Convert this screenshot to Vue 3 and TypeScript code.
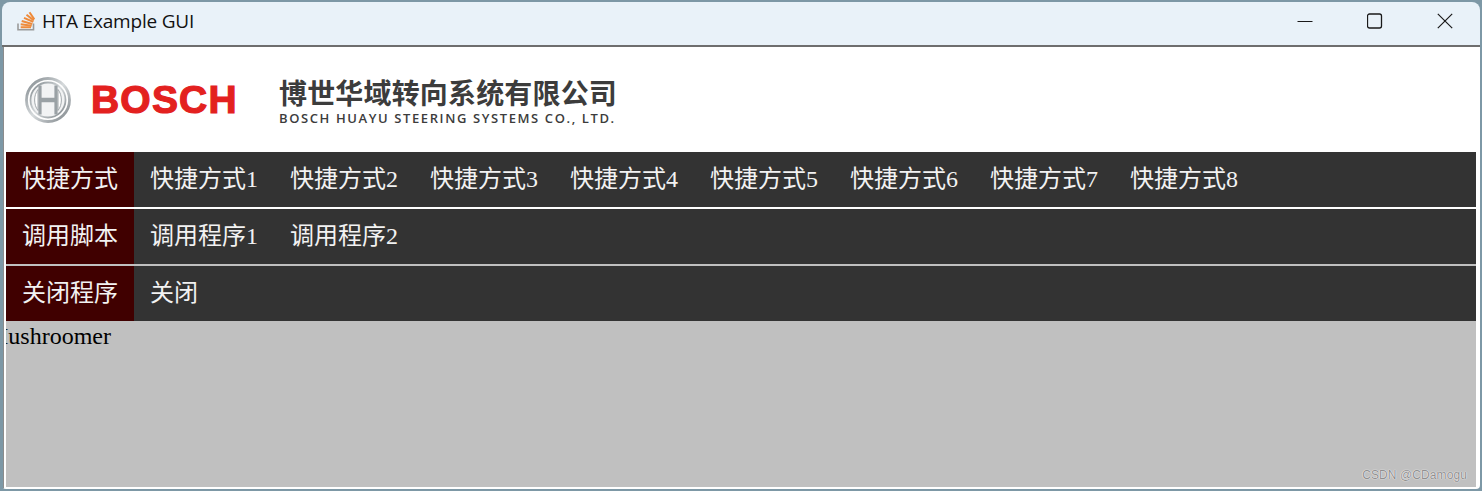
<script setup lang="ts">
const rows: { label: string; items: string[]; divider: string }[] = [
  { label: '快捷方式', items: ['快捷方式1','快捷方式2','快捷方式3','快捷方式4','快捷方式5','快捷方式6','快捷方式7','快捷方式8'], divider: 'white' },
  { label: '调用脚本', items: ['调用程序1','调用程序2'], divider: 'grey' },
  { label: '关闭程序', items: ['关闭'], divider: 'none' },
]
</script>

<template>
  <div class="desktop">
    <div class="window">
      <header class="titlebar">
        <svg class="appicon" width="20" height="20" viewBox="0 0 20 20">
          <path d="M2 12.5v6.3h15.5v-6.3" fill="none" stroke="#9a9a9a" stroke-width="1.6"/>
          <g stroke="#ee8a3a" stroke-width="2" fill="none">
            <path d="M4.7 16.3H15"/>
            <path d="M4.7 13.3l11 1.4"/>
            <path d="M5.7 10l10.6 3"/>
            <path d="M8 6.8l9.3 4"/>
            <path d="M10.5 3.8l7.3 5.6"/>
            <path d="M13.5 1.2l4.8 7"/>
          </g>
        </svg>
        <span class="title">HTA Example GUI</span>
        <div class="controls">
          <svg width="16" height="16" viewBox="0 0 16 16"><path d="M0.5 8.5h15" stroke="#1a1a1a" fill="none"/></svg>
          <svg width="16" height="16" viewBox="0 0 16 16"><rect x="0.5" y="1" width="14" height="14" rx="2" stroke="#1a1a1a" stroke-width="1.3" fill="none"/></svg>
          <svg width="16" height="16" viewBox="0 0 16 16"><path d="M0.8 0.8l14.4 14.4M15.2 0.8L0.8 15.2" stroke="#1a1a1a" stroke-width="1.2" fill="none"/></svg>
        </div>
      </header>

      <main class="client">
        <div class="brand">
          <svg class="emblem" width="46" height="46" viewBox="0 0 46 46">
            <defs>
              <linearGradient id="chrome" x1="0" y1="0" x2="1" y2="1">
                <stop offset="0" stop-color="#7f878c"/>
                <stop offset="0.5" stop-color="#d6dadc"/>
                <stop offset="1" stop-color="#7b8287"/>
              </linearGradient>
            </defs>
            <circle cx="23" cy="23" r="21.5" fill="#fff" stroke="url(#chrome)" stroke-width="2.8"/>
            <circle cx="23" cy="23" r="17.5" fill="#f2f3f4" stroke="url(#chrome)" stroke-width="1.8"/>
            <path d="M13 12.5C8.5 18 8.5 28 13 33.5V12.5ZM33 12.5C37.5 18 37.5 28 33 33.5V12.5Z" fill="#fff" stroke="#a2a8ac"/>
            <path d="M15 8.5V37.5M31 8.5V37.5" stroke="#9aa1a5" stroke-width="3.2" fill="none"/>
            <path d="M15 23H31" stroke="#9aa1a5" stroke-width="4.6" fill="none"/>
          </svg>
          <span class="wordmark">BOSCH</span>
          <div class="company">
            <span class="cn">博世华域转向系统有限公司</span>
            <span class="en">BOSCH HUAYU STEERING SYSTEMS CO., LTD.</span>
          </div>
        </div>

        <section v-for="row in rows" :key="row.label" class="row" :class="row.divider">
          <div class="label">{{ row.label }}</div>
          <a v-for="item in row.items" :key="item" class="item">{{ item }}</a>
        </section>

        <div class="stage">
          <div class="marquee">Mushroomer</div>
          <span class="mark">CSDN @CDamogu</span>
        </div>
      </main>
    </div>
  </div>
</template>

<style>
html, body { margin: 0; background: #7d98a6; overflow: hidden; }
</style>

<style scoped>
.desktop {
  width: 1482px;
  height: 491px;
  padding: 2px;
  box-sizing: border-box;
  background: #7d98a6;
}
.window {
  height: 100%;
  display: flex;
  flex-direction: column;
  border-radius: 8px 8px 4px 4px;
  overflow: hidden;
  background: #7d98a6;
}
.titlebar {
  height: 38px;
  padding: 0 24px 5px 14px;
  flex: none;
  display: flex;
  align-items: center;
  background: #e9f2f9;
  border-bottom: 2px solid #6e6e6e;
}
.appicon { flex: none; }
.title {
  margin-left: 6px;
  font: 19px "Open Sans", "Liberation Sans", sans-serif;
  letter-spacing: -0.2px;
  color: #111;
}
.controls {
  margin-left: auto;
  display: flex;
  gap: 54px;
  padding-right: 3px;
  align-items: center;
}
.client {
  flex: 1;
  display: flex;
  flex-direction: column;
  margin-left: 1px;
  border-left: 1px solid #8c8c8c;
  padding: 0 4px 2px 2px;
  min-height: 0;
  background: #fff;
}
.brand {
  height: 105px;
  flex: none;
  display: flex;
  align-items: center;
  padding-left: 19px;
  box-sizing: border-box;
}
.emblem { flex: none; }
.wordmark {
  margin-left: 20px;
  width: 188px;
  font: 900 39px/1 "Liberation Sans", sans-serif;
  -webkit-text-stroke: 1.2px #e3211f;
  letter-spacing: 1.2px;
  color: #e3211f;
}
.company {
  display: flex;
  flex-direction: column;
  color: #3c3c3c;
  padding-top: 2px;
}
.cn {
  font: 700 28px/34px "Noto Sans CJK SC", sans-serif;
  letter-spacing: 0.17px;
  white-space: nowrap;
}
.en {
  font: 600 13px/18px "Open Sans", "Noto Sans", sans-serif;
  letter-spacing: 1.6px;
  white-space: nowrap;
}
.row {
  height: 55px;
  flex: none;
  display: flex;
  align-items: center;
  background: #333;
  font: 24px/55px "Liberation Serif", "Noto Sans CJK SC", serif;
  color: #f2f2f2;
}
.row.white { border-bottom: 2px solid #fff; box-sizing: content-box; }
.row.grey { border-bottom: 2px solid #c0c0c0; box-sizing: content-box; }
.label {
  width: 128px;
  height: 100%;
  text-align: center;
  background: #400000;
  flex: none;
}
.item { padding: 0 18px 0 16px; white-space: nowrap; width: 106px; flex: none; }
.stage {
  flex: 1;
  position: relative;
  overflow: hidden;
  background: #c0c0c0;
}
.marquee {
  font: 24px/30px "Liberation Serif", serif;
  color: #000;
  text-indent: -19px;
}
.mark {
  position: absolute;
  right: 9px;
  bottom: 5px;
  font: 12px/14px "Liberation Sans", sans-serif;
  letter-spacing: 0.1px;
  color: #8f8f8f;
  text-shadow: 0 0 1px #fff, 0 0 1px #fff;
}
</style>
